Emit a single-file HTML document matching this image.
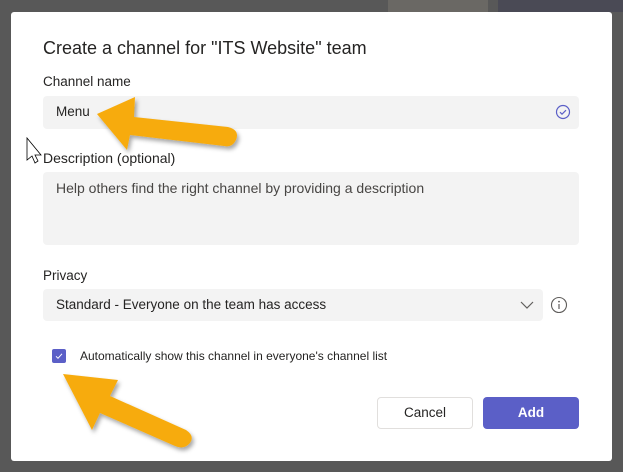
<!DOCTYPE html><html><head><style>
body{margin:0;width:623px;height:472px;background:#585858;position:relative;overflow:hidden;font-family:"Liberation Sans",sans-serif;color:#252423}
.bg1{position:absolute;left:388px;top:0;width:100px;height:12px;background:#6a6864}
.bg2{position:absolute;left:498px;top:0;width:125px;height:12px;background:#4a4a55}
.dlg{position:absolute;left:11px;top:12px;width:601px;height:449px;background:#fff;border-radius:3px}
.t{position:absolute;white-space:nowrap}
.box{position:absolute;background:#f3f3f3;border-radius:4px}
</style></head><body>
<div class="bg1"></div><div class="bg2"></div>
<div class="dlg"></div>
<div class="t" style="left:43px;top:38px;font-size:18px">Create a channel for "ITS Website" team</div>
<div class="t" style="left:43px;top:74px;font-size:13.5px">Channel name</div>
<div class="box" style="left:43px;top:96px;width:536px;height:33px"></div>
<div class="t" style="left:56px;top:104px;font-size:13.5px">Menu</div>
<svg style="position:absolute;left:555px;top:104px" width="16" height="16"><circle cx="8" cy="8" r="6.5" fill="none" stroke="#5b5fc7" stroke-width="1.2"/><path d="M5 8.2l2 2 4-4" fill="none" stroke="#5b5fc7" stroke-width="1.2"/></svg>
<div class="t" style="left:43px;top:150px;font-size:14px">Description (optional)</div>
<div class="box" style="left:43px;top:172px;width:536px;height:73px"></div>
<div class="t" style="left:56px;top:180px;font-size:14px;color:#484644">Help others find the right channel by providing a description</div>
<div class="t" style="left:43px;top:268px;font-size:13.5px">Privacy</div>
<div class="box" style="left:43px;top:289px;width:500px;height:32px"></div>
<div class="t" style="left:56px;top:297px;font-size:13.5px">Standard - Everyone on the team has access</div>
<svg style="position:absolute;left:520px;top:300px" width="14" height="10"><path d="M1 2l6 6 6-6" fill="none" stroke="#605e5c" stroke-width="1.2"/></svg>
<svg style="position:absolute;left:550px;top:296px" width="18" height="18"><circle cx="9" cy="9" r="7.5" fill="none" stroke="#605e5c" stroke-width="1.1"/><path d="M9 8v5" stroke="#605e5c" stroke-width="1.2"/><circle cx="9" cy="5.6" r="0.9" fill="#605e5c"/></svg>
<div style="position:absolute;left:52px;top:349px;width:14px;height:14px;background:#5b5fc7;border-radius:2px"></div>
<svg style="position:absolute;left:52px;top:349px" width="14" height="14"><path d="M4 7.3l2 2 4-4.5" fill="none" stroke="#fff" stroke-width="1"/></svg>
<div class="t" style="left:80px;top:349px;font-size:12px">Automatically show this channel in everyone's channel list</div>
<div style="position:absolute;left:377px;top:397px;width:94px;height:30px;border:1px solid #e1dfdd;border-radius:4px;background:#fff;font-size:13.5px;text-align:center;line-height:30px">Cancel</div>
<div style="position:absolute;left:483px;top:397px;width:96px;height:32px;background:#5b5fc7;border-radius:4px;color:#fff;font-weight:bold;font-size:13.5px;text-align:center;line-height:32px">Add</div>
<svg style="position:absolute;left:0;top:0" width="623" height="472">
<defs><filter id="s"><feDropShadow dx="2" dy="3" stdDeviation="2" flood-opacity="0.35"/></filter></defs>
<path d="M97 114 L135 97 L134 117 L228 127 Q240 130 236 140 Q232 148 224 146 L130 135 L127 150 Z" fill="#f7ab0b" filter="url(#s)"/>
<path d="M63 374 L118 380 L110 396 L186 430 Q195 436 190 443 Q184 450 175 446 L100 413 L92 430 Z" fill="#f7ab0b" filter="url(#s)"/>
<path d="M27 138 L27 160 L32 156 L35 163 L38 161 L35 155 L41 155 Z" fill="#fff" stroke="#000" stroke-width="0.8"/>
</svg>
</body></html>
